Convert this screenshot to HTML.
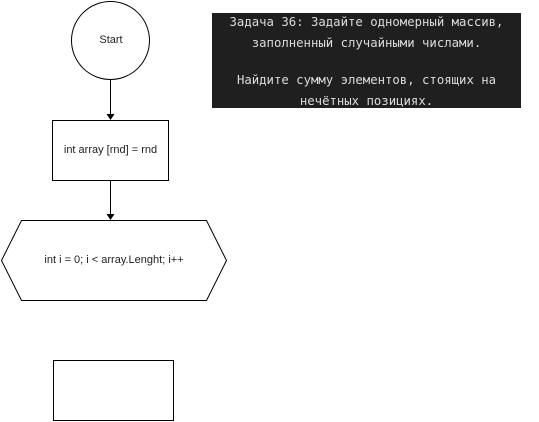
<!DOCTYPE html>
<html><head><meta charset="utf-8"><style>
html,body{margin:0;padding:0;background:#fff;width:539px;height:422px;overflow:hidden;position:relative}
.t{position:absolute;font-family:"Liberation Sans",Arial,sans-serif;font-size:11px;color:#222;text-align:center;white-space:nowrap}
.box{position:absolute;left:212px;top:13px;width:309px;height:95px;background:#1f1f1f}
.l{position:absolute;left:212px;width:309px;text-align:center;color:#dcdcdc;font-family:"DejaVu Sans Mono","Liberation Mono",monospace;font-size:12.3px;line-height:16px;height:16px;white-space:nowrap}
</style></head><body>
<svg width="539" height="422" style="position:absolute;left:0;top:0">
<circle cx="110.5" cy="40.5" r="39" fill="#fff" stroke="#000" stroke-width="1"/>
<line x1="110.5" y1="80" x2="110.5" y2="115" stroke="#000"/>
<path d="M106.5 114 L114.5 114 L110.5 120 Z" fill="#000"/>
<rect x="52.5" y="120.5" width="116" height="60" fill="#fff" stroke="#000"/>
<line x1="110.5" y1="181" x2="110.5" y2="215" stroke="#000"/>
<path d="M106.5 214 L114.5 214 L110.5 220 Z" fill="#000"/>
<path d="M21.5 220.5 L206.5 220.5 L226.5 260.5 L206.5 300.5 L21.5 300.5 L1.5 260.5 Z" fill="#fff" stroke="#000"/>
<rect x="53.5" y="360.5" width="120" height="60" fill="#fff" stroke="#000"/>
</svg>
<div class="t" style="left:71px;width:80px;top:34px">Start</div>
<div class="t" style="left:52px;width:117px;top:144px">int array [rnd] = rnd</div>
<div class="t" style="left:1px;width:226px;top:254px">int i = 0; i &lt; array.Lenght; i++</div>
<div class="box"></div>
<div class="l" style="top:14px">Задача 36: Задайте одномерный массив,</div>
<div class="l" style="top:35px">заполненный случайными числами.</div>
<div class="l" style="top:72px">Найдите сумму элементов, стоящих на</div>
<div class="l" style="top:93px">нечётных позициях.</div>
</body></html>
